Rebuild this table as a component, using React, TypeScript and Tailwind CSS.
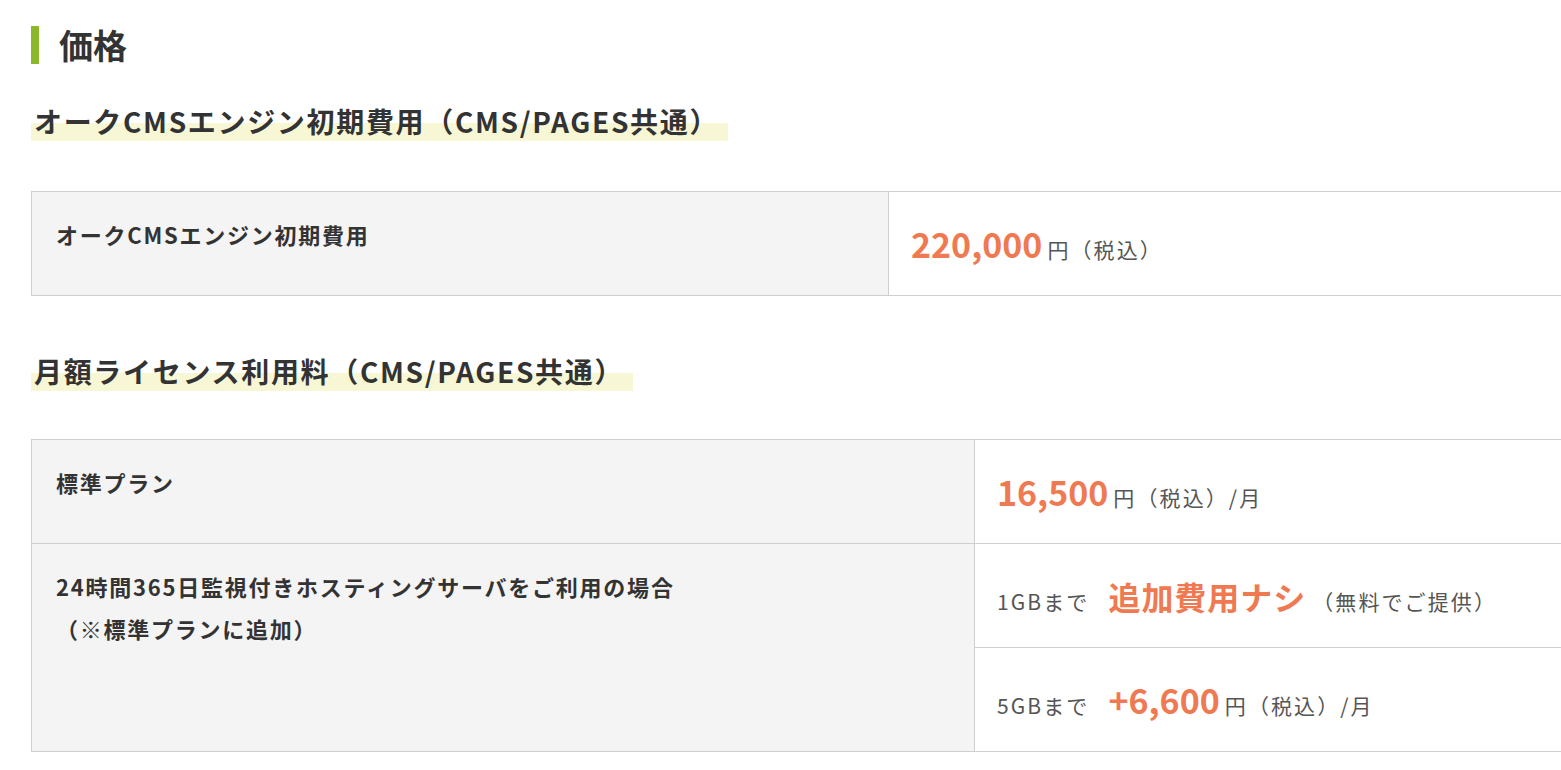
const font = { fontFamily: '"Noto Sans CJK JP", "Noto Sans", sans-serif' }

function SubHeading({ children }: { children: React.ReactNode }) {
  return (
    <h3 className="text-[28px] font-bold leading-[40px] tracking-[0.06em] text-[#333]">
      <span className="inline-block pl-[3px] pr-[9px] bg-[linear-gradient(transparent_55%,#f7f7d6_55%)]">
        {children}
      </span>
    </h3>
  )
}

function Price({ amount, suffix }: { amount: string; suffix: string }) {
  return (
    <span className="inline-flex items-baseline">
      <span className="text-[34px] font-bold tracking-normal text-[#ef7a52]">{amount}</span>
      <span className="ml-[5px] text-[21px] tracking-[0.1em] text-[#555]">{suffix}</span>
    </span>
  )
}

const labelCls =
  "border border-[#cfcfcf] bg-[#f4f4f4] px-[24px] pt-[21px] align-top text-[22px] font-bold leading-[42px] tracking-[0.08em]"
const valueCls = "h-[104px] border border-[#cfcfcf] px-[22px] align-middle"

export default function App() {
  return (
    <div className="min-h-screen w-full overflow-hidden bg-white text-[#333]" style={font}>
      <div className="pl-[31px] pt-[26px]">
        <h2 className="flex items-center border-l-[8px] border-[#8bb82a] pl-[20px] text-[34px] font-bold leading-[38px]">
          価格
        </h2>

        <div className="mt-[37px]">
          <SubHeading>オークCMSエンジン初期費用（CMS/PAGES共通）</SubHeading>
        </div>

        <table className="mt-[50px] w-[1600px] border-collapse">
          <tbody>
            <tr>
              <td className={`h-[104px] w-[857px] ${labelCls}`}>オークCMSエンジン初期費用</td>
              <td className={valueCls}>
                <Price amount="220,000" suffix="円（税込）" />
              </td>
            </tr>
          </tbody>
        </table>

        <div className="mt-[55px]">
          <SubHeading>月額ライセンス利用料（CMS/PAGES共通）</SubHeading>
        </div>

        <table className="mt-[48px] w-[1600px] border-collapse">
          <tbody>
            <tr>
              <td className={`h-[104px] w-[943px] ${labelCls}`}>標準プラン</td>
              <td className={valueCls}>
                <Price amount="16,500" suffix="円（税込）/月" />
              </td>
            </tr>
            <tr>
              <td rowSpan={2} className={labelCls}>
                24時間365日監視付きホスティングサーバをご利用の場合
                <br />
                （※標準プランに追加）
              </td>
              <td className={valueCls}>
                <span className="inline-flex items-baseline text-[21px] tracking-[0.1em] text-[#555]">
                  <span className="mr-[19px]">1GBまで</span>
                  <span className="text-[32px] font-bold tracking-[0.03em] text-[#ef7a52]">追加費用ナシ</span>
                  <span className="ml-[6px]">（無料でご提供）</span>
                </span>
              </td>
            </tr>
            <tr>
              <td className={valueCls}>
                <span className="inline-flex items-baseline text-[21px] tracking-[0.1em] text-[#555]">
                  <span className="mr-[19px]">5GBまで</span>
                  <Price amount="+6,600" suffix="円（税込）/月" />
                </span>
              </td>
            </tr>
          </tbody>
        </table>
      </div>
    </div>
  )
}
